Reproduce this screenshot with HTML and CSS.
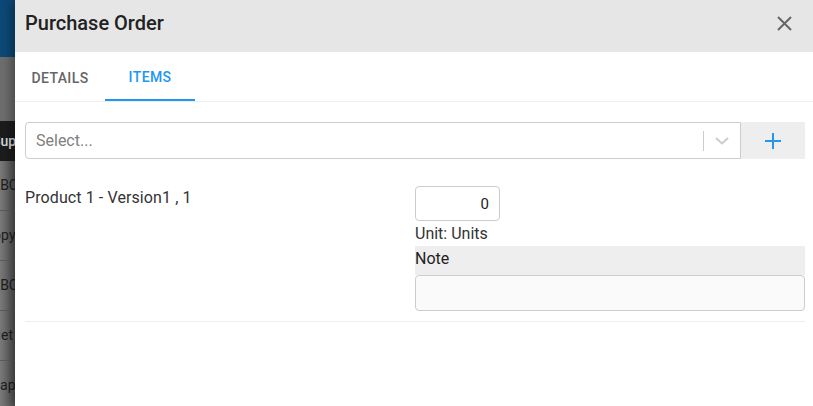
FILE: index.html
```html
<!DOCTYPE html>
<html>
<head>
  <meta charset="UTF-8">
  <title>Purchase Order</title>
  <link rel="stylesheet" href="styles.css">
</head>
<body>
  <div class="screen">
    <!-- page behind the dialog, mostly covered -->
    <div class="backdrop">
      <div class="bd-top"></div>
      <div class="bd-gap"></div>
      <div class="bd-head">Supp</div>
      <div class="bd-row">ABC</div>
      <div class="bd-row wide">Copyt</div>
      <div class="bd-row">ABC</div>
      <div class="bd-row">Net C</div>
      <div class="bd-row">Capit</div>
    </div>

    <div class="modal">
      <div class="modal-header">
        <h2>Purchase Order</h2>
        <button class="close" title="Close">
          <svg width="15" height="15" viewBox="0 0 15 15">
            <path d="M1 1L14 14M14 1L1 14" stroke="#666" stroke-width="2"/>
          </svg>
        </button>
      </div>

      <div class="tabs">
        <div class="tab">Details</div>
        <div class="tab active">Items</div>
      </div>

      <div class="content">
        <div class="add-row">
          <div class="select">
            <span class="placeholder">Select...</span>
            <span class="sep"></span>
            <svg class="chevron" width="14" height="8" viewBox="0 0 14 8">
              <path d="M1 1L7 6.5L13 1" fill="none" stroke="#ccc" stroke-width="2"/>
            </svg>
          </div>
          <button class="add">
            <svg width="16" height="16" viewBox="0 0 16 16">
              <path d="M8 0V16M0 8H16" stroke="#2196f3" stroke-width="2"/>
            </svg>
          </button>
        </div>

        <div class="item">
          <div class="item-name">Product 1 - Version1 , 1</div>
          <div class="item-fields">
            <input class="qty" type="text" value="0">
            <div class="unit">Unit: Units</div>
            <div class="note-label">Note</div>
            <input class="note" type="text">
          </div>
        </div>
      </div>
    </div>
  </div>
</body>
</html>
```

FILE: styles.css
```css
* {
  box-sizing: border-box;
}
body {
  margin: 0;
  font-family: Roboto, "Liberation Sans", Arial, sans-serif;
  color: #222;
  overflow: hidden;
}
.screen {
  display: flex;
  height: 406px;
}

/* backdrop */
.backdrop {
  width: 15px;
  flex-shrink: 0;
  overflow: hidden;
  white-space: nowrap;
  background: #6e6e6e;
  font-size: 14px;
}
.bd-top {
  height: 57px;
  background: #0c4978;
}
.bd-gap {
  height: 64px;
}
.bd-head {
  height: 40px;
  line-height: 40px;
  background: #1c1c1c;
  color: #ddd;
  font-weight: 500;
  text-indent: -8px;
}
.bd-row {
  height: 50px;
  line-height: 48px;
  color: #1d1d1d;
  border-bottom: 1px solid #5c5c5c;
  background: linear-gradient(to right, #7a7a7a, #555);
  text-indent: -9px;
}
.bd-row.wide {
  text-indent: -16px;
}

/* dialog */
.modal {
  flex: 1;
  background: #fff;
  box-shadow: -4px 0 10px rgba(0,0,0,0.35);
  position: relative;
}
.modal-header {
  height: 52px;
  background: #e6e6e6;
  display: flex;
  align-items: flex-start;
  justify-content: space-between;
  padding: 9px 21px 0 10px;
}
.modal-header h2 {
  margin: 0;
  font-size: 20px;
  line-height: 28px;
  font-weight: 500;
  color: #222;
}
.close {
  border: none;
  background: none;
  padding: 0;
  margin-top: 7px;
  display: flex;
  cursor: pointer;
}

.tabs {
  display: flex;
  height: 50px;
  border-bottom: 1px solid #eee;
}
.tab {
  width: 90px;
  height: 49px;
  display: flex;
  align-items: center;
  justify-content: center;
  text-transform: uppercase;
  font-size: 14px;
  font-weight: 500;
  letter-spacing: 0.4px;
  color: #666;
  padding-top: 3px;
}
.tab.active {
  color: #2196f3;
  border-bottom: 2px solid #2196f3;
}

.content {
  padding: 20px 8px 0 10px;
}
.add-row {
  display: flex;
  height: 37px;
}
.select {
  flex: 1;
  display: flex;
  align-items: center;
  border: 1px solid #ccc;
  border-radius: 4px 0 0 4px;
  padding-left: 10px;
}
.placeholder {
  flex: 1;
  color: #808080;
  font-size: 16px;
}
.sep {
  width: 1px;
  height: 20px;
  background: #ccc;
}
.chevron {
  margin: 0 11px 0 11px;
}
.add {
  width: 64px;
  border: none;
  background: #eee;
  display: flex;
  align-items: center;
  justify-content: center;
  cursor: pointer;
}

.item {
  display: flex;
  margin-top: 27px;
  padding-bottom: 10px;
  border-bottom: 1px solid #eee;
}
.item-name {
  flex: 1;
  font-size: 16px;
  line-height: 24px;
  letter-spacing: 0.1px;
  color: #333;
}
.item-fields {
  flex: 1;
  display: flex;
  flex-direction: column;
  align-items: flex-start;
}
.qty {
  width: 85px;
  height: 35px;
  border: 1px solid #ccc;
  border-radius: 4px;
  background: #fff;
  text-align: right;
  padding: 0 10px;
  font: 15px Roboto, "Liberation Sans", Arial, sans-serif;
  color: #222;
}
.unit {
  font-size: 16px;
  line-height: 25px;
  color: #333;
}
.note-label {
  align-self: stretch;
  background: #eee;
  height: 29px;
  padding-top: 3px;
  font-size: 16px;
  line-height: 20px;
  color: #222;
}
.note {
  align-self: stretch;
  height: 36px;
  border: 1px solid #ccc;
  border-radius: 4px;
  background: #fafafa;
}
```
